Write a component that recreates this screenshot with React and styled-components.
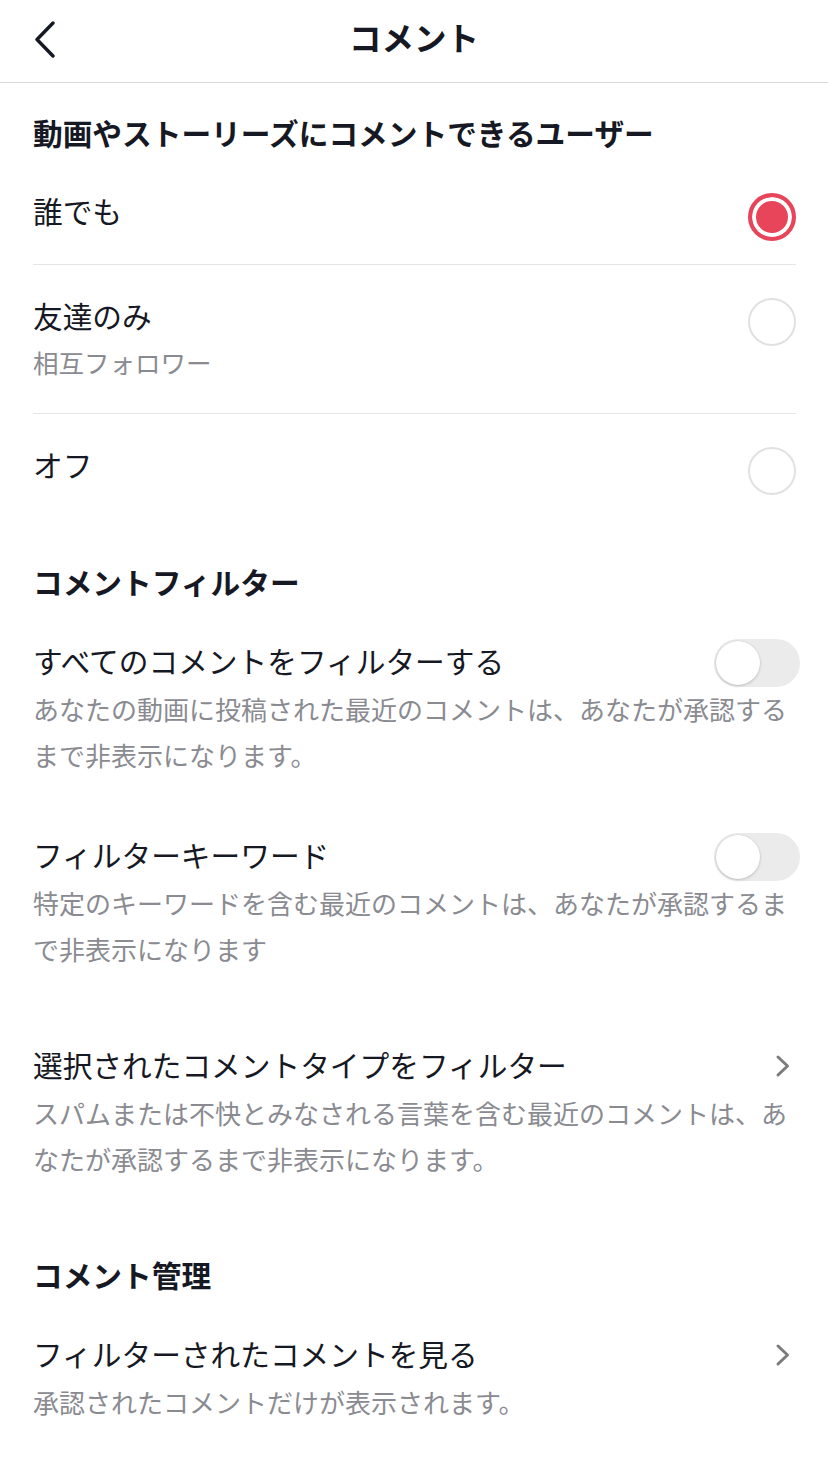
import React from "react";
import styled, { createGlobalStyle } from "styled-components";

const GlobalStyle = createGlobalStyle`
  * { box-sizing: border-box; }
  body {
    margin: 0;
    background: #ffffff;
    font-family: "Noto Sans CJK JP", "Noto Sans", sans-serif;
    color: #161823;
  }
`;

const audience = [
  { id: "all", label: "誰でも" },
  { id: "friends", label: "友達のみ", sub: "相互フォロワー" },
  { id: "off", label: "オフ" },
];

const App = () => {
  const selected = "all";

  return (
    <Page>
      <GlobalStyle />
      <Header>
        <BackButton aria-label="戻る">
          <svg width="26" height="38" viewBox="0 0 26 38" fill="none">
            <polyline
              points="21,3 5,19.5 21,36"
              stroke="#161823"
              strokeWidth="3.4"
              strokeLinecap="round"
              strokeLinejoin="round"
            />
          </svg>
        </BackButton>
        <Title>コメント</Title>
      </Header>

      <Section first>
        <SectionHeading first>動画やストーリーズにコメントできるユーザー</SectionHeading>
        {audience.map((item, i) => (
          <RadioRow key={item.id} last={i === audience.length - 1}>
            <RadioText>
              <RowTitle>{item.label}</RowTitle>
              {item.sub && <RadioSub>{item.sub}</RadioSub>}
            </RadioText>
            <Radio checked={item.id === selected} />
          </RadioRow>
        ))}
      </Section>

      <Section>
        <SectionHeading>コメントフィルター</SectionHeading>
        <SettingRow>
          <TopLine>
            <RowTitle>すべてのコメントをフィルターする</RowTitle>
            <Toggle />
          </TopLine>
          <Description>
            あなたの動画に投稿された最近のコメントは、あなたが承認するまで非表示になります。
          </Description>
        </SettingRow>
        <SettingRow>
          <TopLine>
            <RowTitle>フィルターキーワード</RowTitle>
            <Toggle />
          </TopLine>
          <Description>
            特定のキーワードを含む最近のコメントは、あなたが承認するまで非表示になります
          </Description>
        </SettingRow>
        <SettingRow spaced>
          <TopLine>
            <RowTitle>選択されたコメントタイプをフィルター</RowTitle>
            <Chevron />
          </TopLine>
          <Description>
            スパムまたは不快とみなされる言葉を含む最近のコメントは、あなたが承認するまで非表示になります。
          </Description>
        </SettingRow>
      </Section>

      <Section>
        <SectionHeading>コメント管理</SectionHeading>
        <SettingRow>
          <TopLine>
            <RowTitle>フィルターされたコメントを見る</RowTitle>
            <Chevron />
          </TopLine>
          <Description>承認されたコメントだけが表示されます。</Description>
        </SettingRow>
      </Section>
    </Page>
  );
};

const Chevron = () => (
  <ChevronBox>
    <svg width="18" height="26" viewBox="0 0 18 26" fill="none">
      <polyline
        points="4,4 13.5,13 4,22"
        stroke="#7c7c7c"
        strokeWidth="3"
        strokeLinecap="round"
        strokeLinejoin="round"
      />
    </svg>
  </ChevronBox>
);

export default App;

const Page = styled.div`
  width: 828px;
  min-height: 1464px;
  background: #ffffff;
`;

const Header = styled.header`
  position: relative;
  display: flex;
  align-items: center;
  justify-content: center;
  height: 83px;
  border-bottom: 1px solid #d9d9d9;
`;

const BackButton = styled.button`
  position: absolute;
  left: 32px;
  top: 20px;
  display: flex;
  padding: 0;
  border: none;
  background: none;
`;

const Title = styled.h1`
  margin: 0 0 8px;
  font-size: 32.5px;
  font-weight: 700;
  line-height: 40px;
`;

const Section = styled.section`
  padding: ${({ first }) => (first ? "30px" : "44px")} 32px 0 33px;
`;

const SectionHeading = styled.h2`
  margin: 0 0 ${({ first }) => (first ? "7px" : "11px")};
  font-size: 29.7px;
  font-weight: 700;
  line-height: 40px;
`;

const RadioRow = styled.div`
  display: flex;
  align-items: flex-start;
  justify-content: space-between;
  padding: 31px 0 33px;
  border-bottom: ${({ last }) => (last ? "none" : "1px solid #e6e6e6")};
`;

const RadioText = styled.div`
  display: flex;
  flex-direction: column;
`;

const RowTitle = styled.div`
  font-size: 29.7px;
  font-weight: 400;
  line-height: 40px;
  color: #161823;
`;

const RadioSub = styled.div`
  margin-top: 8px;
  font-size: 25.5px;
  line-height: 36px;
  color: #8a8b91;
`;

const Radio = styled.span`
  flex: none;
  width: 48px;
  height: 48px;
  margin: 2px 0 -10px;
  border-radius: 50%;
  border: ${({ checked }) => (checked ? "4px solid #e8445a" : "2.5px solid #e1e1e1")};
  background: ${({ checked }) => (checked ? "#e8445a" : "#ffffff")};
  box-shadow: ${({ checked }) => (checked ? "inset 0 0 0 4px #ffffff" : "none")};
`;

const SettingRow = styled.div`
  display: flex;
  flex-direction: column;
  padding: 28px 0 29px;
  margin-top: ${({ spaced }) => (spaced ? "16px" : "0")};
`;

const TopLine = styled.div`
  display: flex;
  align-items: flex-start;
  justify-content: space-between;
  height: 40px;
`;

const Description = styled.p`
  margin: 5px 0 0;
  font-size: 26px;
  line-height: 46px;
  color: #8a8b91;
`;

const Toggle = styled.span`
  position: relative;
  flex: none;
  width: 86px;
  height: 48px;
  margin: -2px -4px 0 0;
  border-radius: 24px;
  background: #ebebeb;

  &::after {
    content: "";
    position: absolute;
    left: 2px;
    top: 2px;
    width: 44px;
    height: 44px;
    border-radius: 50%;
    background: #ffffff;
    box-shadow: 0 1px 3px rgba(0, 0, 0, 0.18), 0 0 0 0.5px rgba(0, 0, 0, 0.06);
  }
`;

const ChevronBox = styled.span`
  display: flex;
  flex: none;
  margin: 8px 4px 0 0;
`;
